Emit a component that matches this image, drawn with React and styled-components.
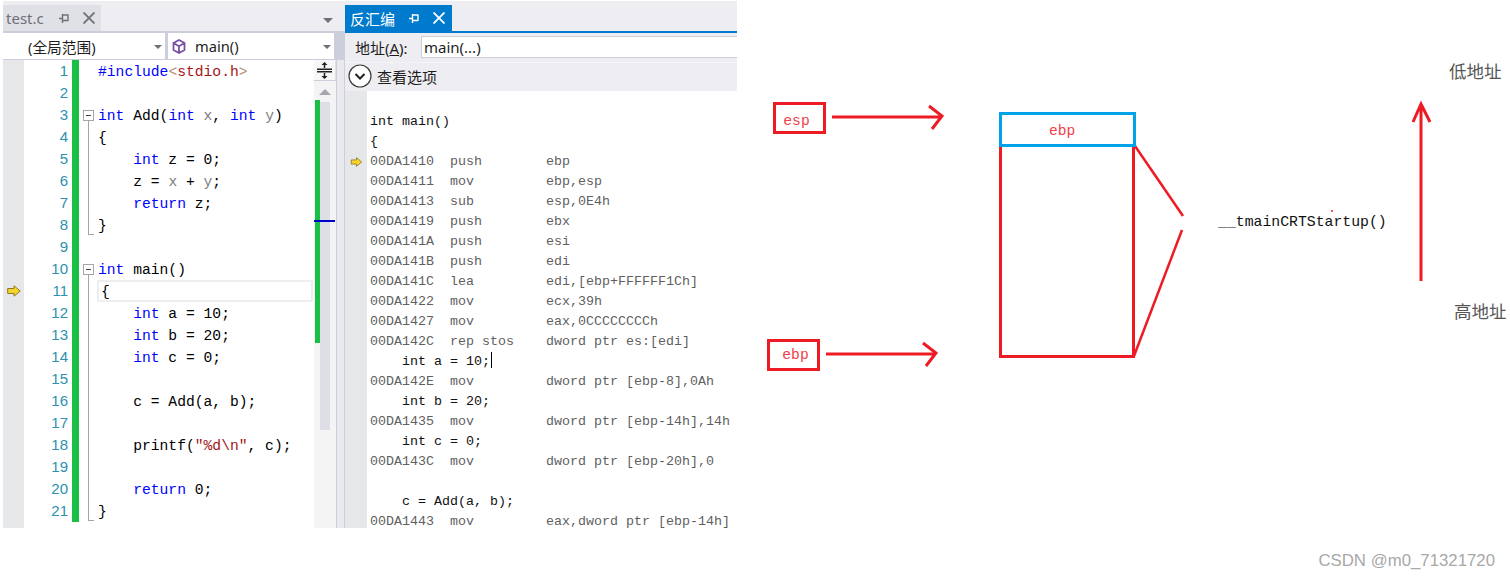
import React from 'react';
import styled, { createGlobalStyle } from 'styled-components';

const GlobalStyle = createGlobalStyle`
  html, body {
    margin: 0;
    padding: 0;
    background: #ffffff;
  }
`;

const UI_FONT = `"Noto Sans", "Noto Sans CJK SC", sans-serif`;
const CODE_FONT = `"Liberation Mono", "Noto Sans CJK SC", monospace`;

const Page = styled.div`
  width: 1510px;
  height: 579px;
  display: flex;
  overflow: hidden;
  background: #ffffff;
`;

const Shot = styled.div`
  width: 734px;
  height: 527px;
  margin: 1px 0 0 3px;
  display: flex;
  flex-shrink: 0;
  overflow: hidden;
  background: #eeeef2;
`;

const EditorPane = styled.div`
  width: 342px;
  display: flex;
  flex-direction: column;
  flex-shrink: 0;
`;

const DisasmPane = styled.div`
  width: 392px;
  display: flex;
  flex-direction: column;
  flex-shrink: 0;
  overflow: hidden;
`;

const TabStrip = styled.div`
  height: 32px;
  padding-top: 4px;
  box-sizing: border-box;
  display: flex;
  align-items: stretch;
  justify-content: space-between;
  flex-shrink: 0;
  border-bottom: 2px solid ${(p) => (p.$active ? '#007acc' : '#cccedb')};
`;

const Tab = styled.div`
  width: ${(p) => (p.$active ? '107px' : '98px')};
  display: flex;
  align-items: center;
  padding-left: ${(p) => (p.$active ? '5px' : '3px')};
  box-sizing: border-box;
  background: ${(p) => (p.$active ? '#007acc' : '#e0e0e7')};
  color: ${(p) => (p.$active ? '#ffffff' : '#6f6f76')};
  font-family: ${UI_FONT};
  font-size: 15px;
`;

const TabTitle = styled.span`
  width: ${(p) => (p.$active ? '59px' : '53px')};
  flex-shrink: 0;
  white-space: nowrap;
`;

const TabIcons = styled.div`
  display: flex;
  align-items: center;
  gap: 13px;
`;

const StripCaret = styled.div`
  width: 0;
  height: 0;
  margin: 13px 12px 0 0;
  border-left: 5px solid transparent;
  border-right: 5px solid transparent;
  border-top: 5px solid #6f6f76;
`;

const NavBar = styled.div`
  height: 27px;
  display: flex;
  gap: 3px;
  flex-shrink: 0;
  background: #cccedb;
  padding-bottom: 1px;
  padding-right: 11px;
  box-sizing: border-box;
`;

const NavBox = styled.div`
  width: ${(p) => p.$width}px;
  padding-left: ${(p) => p.$pad}px;
  box-sizing: border-box;
  display: flex;
  align-items: center;
  position: relative;
  background: #ffffff;
  color: #1e1e1e;
  font-family: ${UI_FONT};
  font-size: 14.7px;
`;

const NavCaret = styled.div`
  position: absolute;
  right: 3px;
  top: 12px;
  width: 0;
  height: 0;
  border-left: 4px solid transparent;
  border-right: 4px solid transparent;
  border-top: 4px solid #6f6f76;
`;

const NavText = styled.span`
  margin-left: ${(p) => p.$gap || 0}px;
`;

const EditorBody = styled.div`
  flex: 1;
  display: flex;
  min-height: 0;
  overflow: hidden;
`;

const Lines = styled.div`
  width: 311px;
  flex-shrink: 0;
  background: #ffffff;
  overflow: hidden;
`;

const Row = styled.div`
  height: 22px;
  display: flex;
  font-family: ${CODE_FONT};
  font-size: 14.67px;
  line-height: 24px;
  white-space: pre;
  color: #000000;
`;

const Glyph = styled.div`
  width: 21px;
  flex-shrink: 0;
  display: flex;
  align-items: center;
  justify-content: center;
  background: #e6e7e8;
`;

const LineNo = styled.div`
  width: 44px;
  flex-shrink: 0;
  text-align: right;
  color: #2b91af;
  font-family: "Liberation Sans", sans-serif;
  font-size: 15px;
  line-height: 22px;
`;

const ChangeBar = styled.div`
  width: 7px;
  margin-left: 4px;
  flex-shrink: 0;
  background: ${(p) => (p.$on ? '#1abf45' : 'transparent')};
`;

const Fold = styled.div`
  width: 18px;
  flex-shrink: 0;
  position: relative;

  &::before {
    content: ${(p) => (p.$kind ? '""' : 'none')};
    position: absolute;
    left: 9px;
    width: 1px;
    background: #a5a5a5;
    top: ${(p) => (p.$kind === 'open' ? '17px' : '0')};
    bottom: ${(p) => (p.$kind === 'end' ? '1px' : '0')};
  }

  &::after {
    content: ${(p) => (p.$kind === 'end' ? '""' : 'none')};
    position: absolute;
    left: 9px;
    bottom: 1px;
    width: 6px;
    height: 1px;
    background: #a5a5a5;
  }
`;

const FoldBox = styled.div`
  position: absolute;
  z-index: 1;
  left: 4px;
  top: 6px;
  width: 11px;
  height: 11px;
  box-sizing: border-box;
  border: 1px solid #a5a5a5;
  background: #ffffff;

  &::after {
    content: "";
    position: absolute;
    left: 2px;
    right: 2px;
    top: 4px;
    height: 1px;
    background: #444444;
  }
`;

const Code = styled.div`
  flex: 1;
  box-sizing: border-box;
  margin-left: ${(p) => (p.$current ? '0' : '1px')};
  margin-right: ${(p) => (p.$current ? '1px' : '0')};
  border: ${(p) => (p.$current ? '2px solid #eeeeee' : 'none')};
  height: 22px;
  line-height: ${(p) => (p.$current ? '20px' : '24px')};
  padding-left: ${(p) => (p.$current ? '2px' : '0')};
`;

const Kw = styled.span`
  color: #0000ff;
`;

const Param = styled.span`
  color: #808080;
`;

const Str = styled.span`
  color: #a31515;
`;

const Angle = styled.span`
  color: #b5866b;
`;

const Scroll = styled.div`
  width: 22px;
  flex-shrink: 0;
  position: relative;
  background: #f4f4f5;
`;

const Splitter = styled.div`
  height: 21px;
  box-sizing: border-box;
  border-bottom: 1px solid #cccedb;
  border-right: 1px solid #e0e0e6;
  display: flex;
  align-items: center;
  justify-content: center;
  background: #f7f7f8;
`;

const ScrollUp = styled.div`
  width: 0;
  height: 0;
  margin: 8px auto 0;
  border-left: 6px solid transparent;
  border-right: 6px solid transparent;
  border-bottom: 6px solid #a5a5ad;
`;

const ScrollGreen = styled.div`
  position: absolute;
  left: 1px;
  top: 40px;
  width: 5px;
  height: 243px;
  background: #1abf45;
`;

const ScrollThumb = styled.div`
  position: absolute;
  left: 6px;
  top: 42px;
  width: 10px;
  height: 328px;
  background: #dedee6;
`;

const ScrollMark = styled.div`
  position: absolute;
  left: 0;
  top: 160px;
  width: 21px;
  height: 2px;
  background: #0000cd;
`;

const Strip = styled.div`
  width: 9px;
  flex-shrink: 0;
  background: #e9e9ee;
  border-left: 1px solid #cccedb;
  border-right: 1px solid #cccedb;
  box-sizing: border-box;
`;

const AddressBar = styled.div`
  height: 30px;
  display: flex;
  align-items: center;
  padding-left: 10px;
  flex-shrink: 0;
  box-sizing: border-box;
  border-bottom: 1px solid #f4f4f7;
  font-family: ${UI_FONT};
  font-size: 15px;
  color: #1e1e1e;
`;

const AddressLabel = styled.span`
  width: 66px;
  flex-shrink: 0;
  white-space: nowrap;
`;

const AddressInput = styled.div`
  flex: 1;
  height: 22px;
  margin-bottom: 2px;
  box-sizing: border-box;
  padding-left: 2px;
  border: 1px solid #cccedb;
  border-right: none;
  background: #ffffff;
  line-height: 20px;
`;

const OptionsBar = styled.div`
  height: 28px;
  display: flex;
  align-items: center;
  gap: 5px;
  padding: 0 0 2px 3px;
  flex-shrink: 0;
  box-sizing: border-box;
  font-family: ${UI_FONT};
  font-size: 15px;
  color: #1e1e1e;
`;

const DisasmBody = styled.div`
  flex: 1;
  display: flex;
  min-height: 0;
  background: #ffffff;
  overflow: hidden;
`;

const DisasmMargin = styled.div`
  width: 22px;
  flex-shrink: 0;
  background: #e6e7e8;
  padding-top: 66px;
  box-sizing: border-box;
  display: flex;
  justify-content: center;
`;

const DisasmText = styled.div`
  flex: 1;
  padding-left: 3px;
  font-family: ${CODE_FONT};
  font-size: 13.33px;
  line-height: 22px;
  white-space: pre;
`;

const AsmLine = styled.div`
  height: 20px;
  color: ${(p) => (p.$asm ? '#5f5f5f' : '#111111')};
`;

const Caret = styled.span`
  display: inline-block;
  width: 1px;
  height: 16px;
  margin-left: 1px;
  vertical-align: -3px;
  background: #000000;
`;

const Canvas = styled.div`
  position: relative;
  flex: 1;
  height: 579px;
`;

const Drawing = styled.svg`
  position: absolute;
  left: 0;
  top: 0;
`;

const NameBox = styled.div`
  position: absolute;
  left: ${(p) => p.$x}px;
  top: ${(p) => p.$y}px;
  width: 53px;
  height: 32px;
  padding: ${(p) => p.$pad};
  box-sizing: border-box;
  border: 3px solid #ed1c24;
  display: flex;
  align-items: center;
  justify-content: center;
  font-family: ${CODE_FONT};
  font-size: 14.67px;
  color: #f0404a;
`;

const FrameLabel = styled.div`
  position: absolute;
  left: 312px;
  top: 121px;
  font-family: ${CODE_FONT};
  font-size: 14.67px;
  line-height: 20px;
  color: #f0404a;
`;

const FuncLabel = styled.div`
  position: absolute;
  left: 481px;
  top: 212px;
  font-family: ${CODE_FONT};
  font-size: 14.8px;
  line-height: 20px;
  white-space: pre;
  color: #111111;
`;

const AddrLabel = styled.div`
  position: absolute;
  left: ${(p) => p.$x}px;
  top: ${(p) => p.$y}px;
  font-family: "Noto Sans CJK SC", sans-serif;
  font-size: 17.5px;
  line-height: 24px;
  white-space: nowrap;
  color: #555555;
`;

const Watermark = styled.div`
  position: absolute;
  right: 15px;
  top: 551px;
  font-family: "Liberation Sans", sans-serif;
  font-size: 16.8px;
  line-height: 20px;
  white-space: nowrap;
  color: #a8a8a8;
`;

const Pin = ({ color }) => (
  <svg width="11" height="11" viewBox="0 0 11 11" fill="none" stroke={color} strokeWidth="1.4">
    <path d="M0 5.5h3.5M3.5 1v9M3.5 2h6M3.5 7.5h6M9 2v5.5" />
  </svg>
);

const Close = ({ color }) => (
  <svg width="12" height="12" viewBox="0 0 12 12" fill="none" stroke={color} strokeWidth="1.8">
    <path d="M0.5 0.5l11 11M11.5 0.5l-11 11" />
  </svg>
);

const Cube = () => (
  <svg width="14" height="15" viewBox="0 0 14 15" fill="none" stroke="#7a4fa3" strokeWidth="1.8">
    <path d="M7 1l5.5 3v7L7 14l-5.5-3V4zM1.5 4L7 7.3 12.5 4M7 7.3V14" />
  </svg>
);

const StepArrow = ({ width, height }) => (
  <svg width={width} height={height} viewBox="0 0 14 12">
    <path d="M0.7 3.5h6.3V0.8L13.2 6 7 11.2V8.5H0.7z" fill="#f6d32d" stroke="#8f7a1e" strokeWidth="1" />
  </svg>
);

const ExpandCircle = () => (
  <svg width="24" height="24" viewBox="0 0 24 24" fill="none">
    <circle cx="12" cy="12" r="11" fill="#ffffff" stroke="#3c3c3c" strokeWidth="1.2" />
    <path d="M7.5 10l4.5 4.5L16.5 10" stroke="#222222" strokeWidth="2" />
  </svg>
);

const SplitIcon = () => (
  <svg width="15" height="17" viewBox="0 0 15 17" fill="none" stroke="#222222" strokeWidth="1.5">
    <path d="M0 7.2h15M0 9.8h15M7.5 1v5M7.5 11v5" />
    <path d="M4.500 3l3-3 3 3zM4.500 14l3 3 3-3z" fill="#222222" stroke="none" />
  </svg>
);

const Diagram = () => (
  <Drawing width="773" height="579" viewBox="737 0 773 579" fill="none" stroke="#ed1c24" strokeWidth="3">
    <path d="M832 117H942M929 106L942 116L932 129" />
    <path d="M826 354H936M923 343L936 353L926 366" />
    <path d="M1000.500 146V356.500H1133.500V146" />
    <path d="M1135 146L1183 216" strokeWidth="2.500" />
    <path d="M1182 230L1134 356" strokeWidth="2.500" />
    <rect x="1000.500" y="113.500" width="134" height="32" stroke="#00a2e8" />
    <path d="M1421 281V105M1413 122L1421 104L1430 122" />
    <path d="M1331 211h2" strokeWidth="1.500" />
  </Drawing>
);

const SOURCE = [
  { code: <><Kw>#include</Kw><Angle>&lt;</Angle><Str>stdio.h</Str><Angle>&gt;</Angle></> },
  {},
  { fold: 'open', code: <><Kw>int</Kw> Add(<Kw>int</Kw> <Param>x</Param>, <Kw>int</Kw> <Param>y</Param>)</> },
  { fold: 'line', code: '{' },
  { fold: 'line', code: <>    <Kw>int</Kw> z = 0;</> },
  { fold: 'line', code: <>    z = <Param>x</Param> + <Param>y</Param>;</> },
  { fold: 'line', code: <>    <Kw>return</Kw> z;</> },
  { fold: 'end', code: '}' },
  {},
  { fold: 'open', code: <><Kw>int</Kw> main()</> },
  { fold: 'line', code: '{', current: true },
  { fold: 'line', code: <>    <Kw>int</Kw> a = 10;</> },
  { fold: 'line', code: <>    <Kw>int</Kw> b = 20;</> },
  { fold: 'line', code: <>    <Kw>int</Kw> c = 0;</> },
  { fold: 'line' },
  { fold: 'line', code: '    c = Add(a, b);' },
  { fold: 'line' },
  { fold: 'line', code: <>    printf(<Str>"%d\n"</Str>, c);</> },
  { fold: 'line' },
  { fold: 'line', code: <>    <Kw>return</Kw> 0;</> },
  { fold: 'end', code: '}' },
];

const DISASM = [
  { text: '' },
  { text: 'int main()' },
  { text: '{' },
  { asm: true, text: '00DA1410  push        ebp' },
  { asm: true, text: '00DA1411  mov         ebp,esp' },
  { asm: true, text: '00DA1413  sub         esp,0E4h' },
  { asm: true, text: '00DA1419  push        ebx' },
  { asm: true, text: '00DA141A  push        esi' },
  { asm: true, text: '00DA141B  push        edi' },
  { asm: true, text: '00DA141C  lea         edi,[ebp+FFFFFF1Ch]' },
  { asm: true, text: '00DA1422  mov         ecx,39h' },
  { asm: true, text: '00DA1427  mov         eax,0CCCCCCCCh' },
  { asm: true, text: '00DA142C  rep stos    dword ptr es:[edi]' },
  { text: '    int a = 10;', caret: true },
  { asm: true, text: '00DA142E  mov         dword ptr [ebp-8],0Ah' },
  { text: '    int b = 20;' },
  { asm: true, text: '00DA1435  mov         dword ptr [ebp-14h],14h' },
  { text: '    int c = 0;' },
  { asm: true, text: '00DA143C  mov         dword ptr [ebp-20h],0' },
  { text: '' },
  { text: '    c = Add(a, b);' },
  { asm: true, text: '00DA1443  mov         eax,dword ptr [ebp-14h]' },
];

export default function App() {
  return (
    <Page>
      <GlobalStyle />
      <Shot>
        <EditorPane>
          <TabStrip>
            <Tab>
              <TabTitle>test.c</TabTitle>
              <TabIcons>
                <Pin color="#6f6f76" />
                <Close color="#6f6f76" />
              </TabIcons>
            </Tab>
            <StripCaret />
          </TabStrip>
          <NavBar>
            <NavBox $width={162} $pad={25}>
              (全局范围)
              <NavCaret />
            </NavBox>
            <NavBox $width={166} $pad={4}>
              <Cube />
              <NavText $gap={9}>main()</NavText>
              <NavCaret />
            </NavBox>
          </NavBar>
          <EditorBody>
            <Lines>
              {SOURCE.map((line, i) => (
                <Row key={i}>
                  <Glyph>{line.current && <StepArrow width={14} height={12} />}</Glyph>
                  <LineNo>{i + 1}</LineNo>
                  <ChangeBar $on />
                  <Fold $kind={line.fold}>{line.fold === 'open' && <FoldBox />}</Fold>
                  <Code $current={line.current}>{line.code}</Code>
                </Row>
              ))}
              <Row>
                <Glyph />
              </Row>
            </Lines>
            <Scroll>
              <Splitter>
                <SplitIcon />
              </Splitter>
              <ScrollUp />
              <ScrollGreen />
              <ScrollThumb />
              <ScrollMark />
            </Scroll>
            <Strip />
          </EditorBody>
        </EditorPane>
        <DisasmPane>
          <TabStrip $active>
            <Tab $active>
              <TabTitle $active>反汇编</TabTitle>
              <TabIcons>
                <Pin color="#ffffff" />
                <Close color="#ffffff" />
              </TabIcons>
            </Tab>
          </TabStrip>
          <AddressBar>
            <AddressLabel>
              地址(<u>A</u>):
            </AddressLabel>
            <AddressInput>main(...)</AddressInput>
          </AddressBar>
          <OptionsBar>
            <ExpandCircle />
            查看选项
          </OptionsBar>
          <DisasmBody>
            <DisasmMargin>
              <StepArrow width={13} height={10} />
            </DisasmMargin>
            <DisasmText>
              {DISASM.map((line, i) => (
                <AsmLine key={i} $asm={line.asm}>
                  {line.text}
                  {line.caret && <Caret />}
                </AsmLine>
              ))}
            </DisasmText>
          </DisasmBody>
        </DisasmPane>
      </Shot>
      <Canvas>
        <Diagram />
        <NameBox $x={36} $y={102} $pad="6px 6px 0 0">esp</NameBox>
        <NameBox $x={30} $y={339} $pad="0 0 0 4px">ebp</NameBox>
        <FrameLabel>ebp</FrameLabel>
        <FuncLabel>__tmainCRTStartup()</FuncLabel>
        <AddrLabel $x={712} $y={59}>低地址</AddrLabel>
        <AddrLabel $x={717} $y={299}>高地址</AddrLabel>
        <Watermark>CSDN @m0_71321720</Watermark>
      </Canvas>
    </Page>
  );
}
